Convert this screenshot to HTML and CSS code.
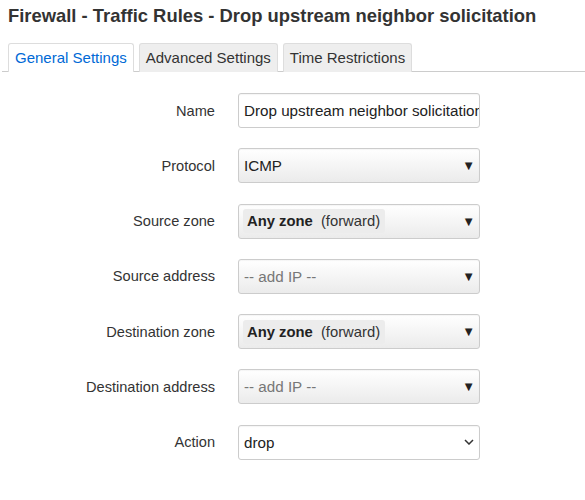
FILE: index.html
```html
<!DOCTYPE html>
<html lang="en">
<head>
    <meta charset="UTF-8">
    <title>Firewall - Traffic Rules</title>
    <link rel="stylesheet" href="styles.css">
</head>
<body>
    <h2 class="title">Firewall - Traffic Rules - Drop upstream neighbor solicitation</h2>

    <ul class="tabs">
        <li class="tab active">General Settings</li>
        <li class="tab">Advanced Settings</li>
        <li class="tab">Time Restrictions</li>
    </ul>

    <div class="form">
        <div class="row">
            <label class="label">Name</label>
            <div class="field text-field name-field">
                <span class="value">Drop upstream neighbor solicitation</span>
            </div>
        </div>
        <div class="row">
            <label class="label">Protocol</label>
            <div class="field dropdown">
                <span class="value">ICMP</span>
                <span class="caret">&#9660;</span>
            </div>
        </div>
        <div class="row">
            <label class="label">Source zone</label>
            <div class="field dropdown">
                <span class="zone"><b>Any zone</b> (forward)</span>
                <span class="caret">&#9660;</span>
            </div>
        </div>
        <div class="row">
            <label class="label">Source address</label>
            <div class="field dropdown">
                <span class="value placeholder">-- add IP --</span>
                <span class="caret">&#9660;</span>
            </div>
        </div>
        <div class="row">
            <label class="label">Destination zone</label>
            <div class="field dropdown">
                <span class="zone"><b>Any zone</b> (forward)</span>
                <span class="caret">&#9660;</span>
            </div>
        </div>
        <div class="row">
            <label class="label">Destination address</label>
            <div class="field dropdown">
                <span class="value placeholder">-- add IP --</span>
                <span class="caret">&#9660;</span>
            </div>
        </div>
        <div class="row">
            <label class="label">Action</label>
            <div class="field text-field">
                <span class="value">drop</span>
                <svg class="chevron" width="10" height="6" viewBox="0 0 10 6">
                    <path d="M1 1l4 4 4-4" fill="none" stroke="#333" stroke-width="1.5"/>
                </svg>
            </div>
        </div>
    </div>
</body>
</html>
```

FILE: styles.css
```css
body {
    font-family: 'Liberation Sans', Arial, sans-serif;
    color: #333;
    margin: 0;
    padding: 0 0 0 2px;
    background: #fff;
}

.title {
    font-size: 18.4px;
    font-weight: bold;
    margin: 0;
    padding: 5px 0 0 6px;
    line-height: 21px;
    color: #333;
}

.tabs {
    list-style: none;
    margin: 17px 0 0 0;
    padding: 0 0 0 6px;
    display: flex;
    gap: 5px;
    border-bottom: 1px solid #ccc;
}

.tab {
    font-size: 15px;
    line-height: 17px;
    padding: 5px 6px 5px 6px;
    border: 1px solid #ddd;
    border-bottom: none;
    border-radius: 3px 3px 0 0;
    background: #eee;
    color: #333;
    margin-bottom: -1px;
}

.tab.active {
    background: #fff;
    color: #0069d6;
    padding-bottom: 6px;
}

.form {
    padding-top: 21px;
}

.row {
    display: flex;
    align-items: center;
    height: 35px;
    margin-bottom: 20.3px;
}

.label {
    width: 213px;
    text-align: right;
    font-size: 14.6px;
    color: #333;
    padding-right: 23px;
    flex-shrink: 0;
}

.field {
    box-sizing: border-box;
    width: 242px;
    height: 35px;
    border: 1px solid #ccc;
    border-radius: 3px;
    display: flex;
    align-items: center;
    padding: 0 4px 0 5px;
    font-size: 15.2px;
    overflow: hidden;
    white-space: nowrap;
    background: #fff;
    box-shadow: inset 0 1px 1px rgba(0, 0, 0, 0.04);
}

/* long name is clipped at the box edge, like the real input */
.name-field {
    padding-right: 0;
}

.dropdown {
    background: linear-gradient(#fff, #ebebeb);
}

.value {
    flex: 1;
    overflow: hidden;
    color: #222;
}

.placeholder {
    color: #777;
}

.zone {
    flex: none;
    background: #ececec;
    border-radius: 3px;
    padding: 4px 5px 4px 4px;
    margin-left: -1px;
    font-size: 14.8px;
    color: #333;
}

.zone b {
    margin-right: 4px;
    color: #222;
}

.dropdown .zone + .caret {
    margin-left: auto;
}

.caret {
    font-size: 13px;
    color: #222;
    margin-left: 6px;
}

.chevron {
    margin-left: auto;
    margin-right: 1px;
}
```
